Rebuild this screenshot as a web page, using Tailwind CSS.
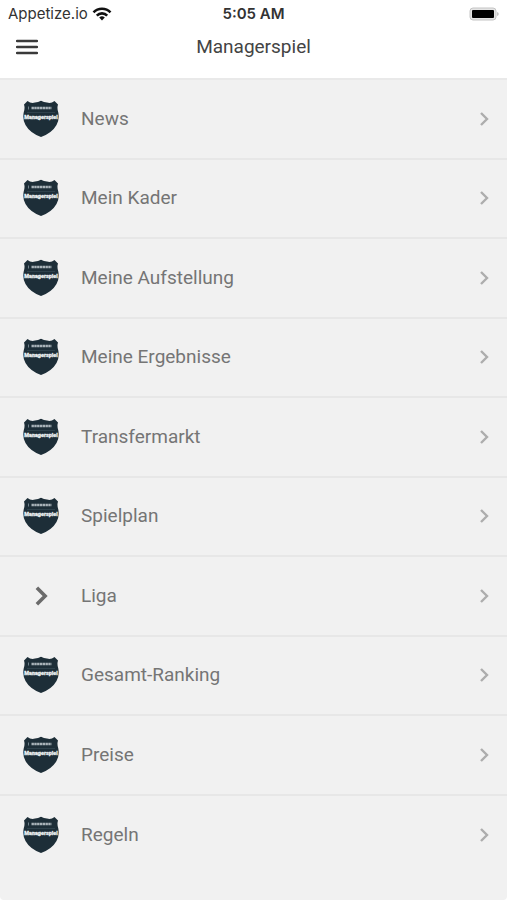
<!DOCTYPE html>
<html lang="de">
  <head>
    <meta charset="UTF-8" />
    <meta name="viewport" content="width=device-width, initial-scale=1.0" />
    <title>Managerspiel</title>
    <script src="https://cdn.jsdelivr.net/npm/@tailwindcss/browser@4"></script>
  </head>
  <body class="bg-white font-['Roboto','Inter',sans-serif]">
    <!-- Shared icons -->
    <svg class="hidden">
      <symbol id="shield" viewBox="0 0 36 38">
        <path
          d="M4.500 1 Q8 3.800 12 2.600 Q15 2.600 18 0.800 Q21 2.600 24 2.600 Q28 3.800 31.500 1 L35 4.500 Q33.800 8 35.200 12 Q36.800 19 33.500 25 Q29 33 18 37 Q7 33 2.500 25 Q-0.800 19 0.800 12 Q2.200 8 1 4.500 Z"
          fill="#1d2e38"
        />
        <path d="M5.500 6.500v3" stroke="#71818a" stroke-width="1" />
        <path
          d="M8.500 8h20"
          stroke="#a9b3b9"
          stroke-width="2.400"
          stroke-dasharray="2.400 0.400"
        />
        <path d="M4 12.500h28" stroke="#3d505b" stroke-width="0.600" />
        <text
          x="18"
          y="18.500"
          text-anchor="middle"
          font-family="Roboto, sans-serif"
          font-size="5.400"
          font-weight="900"
          fill="#e8edef"
          stroke="#e8edef"
          stroke-width="0.300"
        >
          Managerspiel
        </text>
      </symbol>
      <symbol id="chevron" viewBox="0 0 10 16">
        <path d="M2 2l6 6-6 6" fill="none" stroke="currentColor" />
      </symbol>
    </svg>

    <div class="flex min-h-screen flex-col">
      <!-- Status bar -->
      <div class="grid h-7 grid-cols-3 items-center px-2 font-['Inter',sans-serif] text-[15px] text-[#333]">
        <div class="flex items-center gap-1">
          <span>Appetize.io</span>
          <svg class="h-[14px] w-[20px]" viewBox="0 0 20 14" fill="none" stroke="#111" stroke-width="2.600">
            <path d="M1.500 5.300a12 12 0 0 1 17 0" />
            <path d="M4.800 8.600a7.300 7.300 0 0 1 10.400 0" />
            <path d="M10 13.500l-2.800-2.900a4 4 0 0 1 5.600 0z" fill="#111" stroke="none" />
          </svg>
        </div>
        <div class="text-center font-semibold">5:05 AM</div>
        <svg class="h-[14px] w-[30px] justify-self-end" viewBox="0 0 30 14">
          <rect x="1" y="1" width="26" height="12" rx="3" fill="#e4e4e4" stroke="#c4c4c4" />
          <rect x="3" y="3" width="22" height="8" rx="1" fill="#000" />
          <path d="M28.300 5a2.200 2.200 0 0 1 0 4z" fill="#aaa" />
        </svg>
      </div>

      <!-- Header -->
      <header
        class="grid h-[52px] grid-cols-[40px_1fr_40px] items-start border-b-2 border-[#e9e9e9] px-4 pt-[5px]"
      >
        <button type="button" aria-label="Menü" class="flex h-7 items-center">
          <svg class="h-4 w-[22px]" viewBox="0 0 22 16" stroke="#3a3a3a" stroke-width="2.400" stroke-linecap="round">
            <path d="M1 2h20M1 8h20M1 14h20" />
          </svg>
        </button>
        <h1 class="text-center text-[19px] leading-7 text-[#444]">Managerspiel</h1>
      </header>

      <!-- Menu -->
      <nav class="flex flex-1 rounded-b-sm bg-[#f1f1f1] pb-[25px]">
        <ul id="menu" class="grid flex-1 auto-rows-fr divide-y-2 divide-[#e7e7e7]"></ul>
      </nav>
    </div>

    <script>
      const items = [
        "News",
        "Mein Kader",
        "Meine Aufstellung",
        "Meine Ergebnisse",
        "Transfermarkt",
        "Spielplan",
        "Liga",
        "Gesamt-Ranking",
        "Preise",
        "Regeln",
      ];

      const shield = `<svg class="h-[38px] w-9"><use href="#shield" /></svg>`;
      const arrow = `<svg class="h-[22px] w-[14px] text-[#6b6b6b]" stroke-width="2.600"><use href="#chevron" /></svg>`;

      document.getElementById("menu").innerHTML = items
        .map(
          (item) => `
            <li>
              <a href="#" class="flex h-full items-center pr-[18px] pl-[23px] text-[19px] leading-7 text-[#757575]">
                <span class="flex w-9 justify-center">${item === "Liga" ? arrow : shield}</span>
                <span class="ml-[22px] flex-1">${item}</span>
                <svg class="h-4 w-[10px] text-[#adadad]" stroke-width="2.400"><use href="#chevron" /></svg>
              </a>
            </li>`
        )
        .join("");
    </script>
  </body>
</html>
